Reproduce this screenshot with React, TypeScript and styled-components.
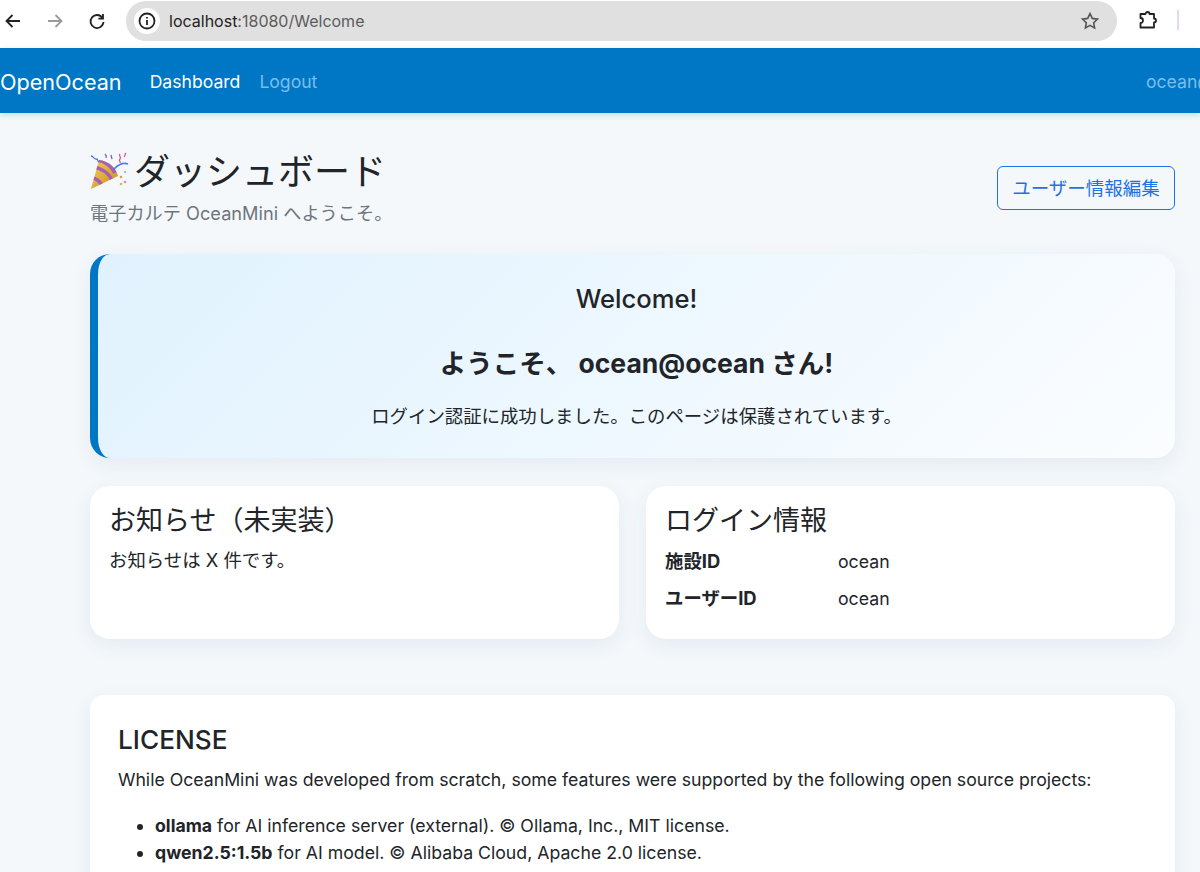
import styled, { createGlobalStyle } from "styled-components"

const SANS = `Inter, "Noto Sans CJK JP", sans-serif`

const GlobalStyle = createGlobalStyle`
  html, body {
    margin: 0;
    padding: 0;
    height: 872px;
    overflow: hidden;
    background: #f4f8fb;
    font-family: ${SANS};
    color: #212529;
  }
`

const Chrome = styled.div`
  height: 48px;
  background: #fff;
  display: flex;
  align-items: center;
  position: relative;
`

const NavIcon = styled.svg<{ $faded?: boolean }>`
  width: 20px;
  height: 20px;
  flex: none;
  fill: none;
  stroke: ${(p) => (p.$faded ? "#9a9a9a" : "#222")};
  stroke-width: 1.8;
`

const StarIcon = styled(NavIcon)`
  stroke: #555;
  stroke-width: 1.6;
`

const ChromeButtons = styled.div`
  display: flex;
  gap: 22px;
  padding: 0 19px 7px 3px;
`

const Omnibox = styled.div`
  width: 991px;
  height: 40px;
  margin-top: -7px;
  background: #e0e0e0;
  border-radius: 20px;
  display: flex;
  align-items: center;
  padding: 0 17px 0 8px;
  box-sizing: border-box;
  font-size: 16px;
  color: #5c5c5c;
`

const InfoBadge = styled.span`
  width: 26px;
  height: 26px;
  border-radius: 50%;
  background: #fff;
  display: flex;
  align-items: center;
  justify-content: center;
  margin-right: 9px;
`

const Host = styled.span`
  color: #222;
`

const Url = styled.span`
  flex: 1;
`

const ExtensionSlot = styled.div`
  margin: -8px 0 0 21px;
  display: flex;
  align-items: center;
  gap: 19px;
`

const Divider = styled.span`
  width: 2px;
  height: 20px;
  background: #e8d5f2;
`

const TopBar = styled.nav`
  height: 65px;
  box-sizing: border-box;
  padding-top: 2px;
  background: #0077c5;
  display: flex;
  align-items: center;
  position: relative;
  white-space: nowrap;
  box-shadow: 0 2px 6px rgba(0, 80, 140, 0.18);
`

const Brand = styled.span`
  font-size: 21.6px;
  color: #fff;
  margin-right: 28px;
`

const NavLink = styled.span<{ $dim?: boolean }>`
  font-size: 17.6px;
  color: ${(p) => (p.$dim ? "#7dbde9" : "#fff")};
  margin-right: 19px;
`

const NavUser = styled.span`
  position: absolute;
  left: 1146px;
  font-size: 17.6px;
  color: #7dbde9;
`

const Main = styled.main`
  padding: 37px 25px 0 90px;
`

const Header = styled.header`
  display: flex;
  justify-content: space-between;
  align-items: flex-start;
  height: 77px;
  margin-bottom: 27px;
`

const Title = styled.h1`
  margin: 0;
  font-size: 36px;
  font-weight: 400;
  line-height: 44px;
  display: flex;
  align-items: center;
`

const Confetti = styled.svg`
  width: 39px;
  height: 38px;
  margin: -3px 5px 0 0;
`

const Subtitle = styled.p`
  margin: 7px 0 0;
  font-size: 18.2px;
  line-height: 24px;
  color: #6c757d;
`

const EditButton = styled.button`
  width: 178px;
  height: 44px;
  background: transparent;
  border: 1px solid #1f72e4;
  border-radius: 6px;
  color: #1f72e4;
  font: 18.5px ${SANS};
  padding: 0 0 2px;
  margin-top: 16px;
`

const WelcomeCard = styled.section`
  height: 204px;
  box-sizing: border-box;
  border-left: 8px solid #0077c5;
  border-radius: 20px;
  background: linear-gradient(135deg, #e0f2fe 0%, #fbfdff 100%);
  box-shadow: 0 6px 20px rgba(40, 80, 120, 0.08);
  text-align: center;
  padding-top: 28px;
`

const WelcomeTitle = styled.h2`
  margin: 0;
  font-size: 25.6px;
  font-weight: 500;
  line-height: 34px;
`

const Greeting = styled.h2`
  margin: 29px 0 0;
  font-size: 26.5px;
  font-weight: 700;
  line-height: 36px;
`

const WelcomeText = styled.p`
  margin: 22px 0 0;
  font-size: 18.4px;
  line-height: 26px;
`

const InfoRow = styled.div`
  display: grid;
  grid-template-columns: 529px 529px;
  gap: 27px;
  margin-top: 28px;
`

const Card = styled.section`
  height: 153px;
  box-sizing: border-box;
  padding: 16px 19px;
  background: #fff;
  border-radius: 20px;
  box-shadow: 0 6px 20px rgba(40, 80, 120, 0.08);
`

const CardTitle = styled.h3`
  margin: 0 0 3px;
  font-size: 27px;
  font-weight: 400;
  line-height: 38px;
`

const CardText = styled.p`
  margin: 7px 0 0;
  font-size: 18.4px;
  line-height: 27px;
`

const InfoLine = styled.div`
  display: grid;
  grid-template-columns: 173px 1fr;
  font-size: 17.7px;
  line-height: 37px;
`

const InfoLabel = styled.span`
  font-size: 18.4px;
  font-weight: 700;
`

const LicenseCard = styled.section`
  margin-top: 56px;
  height: 300px;
  box-sizing: border-box;
  padding: 26px 28px;
  background: #fff;
  border-radius: 14px 14px 0 0;
  box-shadow: 0 6px 20px rgba(40, 80, 120, 0.08);
`

const LicenseTitle = styled.h2`
  margin: 0;
  font-size: 26.2px;
  font-weight: 500;
  line-height: 38px;
`

const LicenseText = styled.p`
  margin: 7px 0 0;
  font-size: 17.68px;
  line-height: 27px;
`

const LicenseList = styled.ul`
  margin: 19px 0 0;
  padding-left: 37px;
  font-size: 17.7px;
  line-height: 27px;
`

const Stage = styled.div`
  width: 1200px;
  height: 872px;
  overflow: hidden;
`

export default function App() {
  return (
    <Stage>
      <GlobalStyle />
      <Chrome>
        <ChromeButtons>
          <NavIcon viewBox="0 0 20 20"><path d="M17 10H4M9.500 4 3.500 10l6 6" /></NavIcon>
          <NavIcon $faded viewBox="0 0 20 20"><path d="M3 10h13M10.500 4l6 6-6 6" /></NavIcon>
          <NavIcon viewBox="0 0 20 20"><path d="M15.500 7A6.500 6.500 0 1 0 16.500 11M16 3v4.600h-4.600" /></NavIcon>
        </ChromeButtons>
        <Omnibox>
          <InfoBadge>
            <NavIcon viewBox="0 0 20 20">
              <circle cx="10" cy="10" r="7.500" />
              <path d="M10 9v5M10 6v1.600" />
            </NavIcon>
          </InfoBadge>
          <Url><Host>localhost</Host>:18080/Welcome</Url>
          <StarIcon viewBox="0 0 20 20">
            <path d="m10 2.600 2.300 4.800 5.200.7-3.800 3.600.9 5.200L10 14.400l-4.600 2.500.9-5.200-3.800-3.600 5.200-.7z" />
          </StarIcon>
        </Omnibox>
        <ExtensionSlot>
          <NavIcon viewBox="0 0 20 20">
            <path d="M2.500 4h5a2 2 0 0 1 4 0H16v4.500a2 2 0 0 1 0 4V17.500H2.500V13a2.500 2.500 0 0 0 0-5z" strokeLinejoin="round" />
          </NavIcon>
          <Divider />
        </ExtensionSlot>
      </Chrome>
      <TopBar>
        <Brand>OpenOcean</Brand>
        <NavLink>Dashboard</NavLink>
        <NavLink $dim>Logout</NavLink>
        <NavUser>ocean@ocean</NavUser>
      </TopBar>
      <Main>
        <Header>
          <div>
            <Title>
              <Confetti viewBox="0 0 39 38">
                <defs>
                  <linearGradient id="cone" x1="0" y1="0" x2="1" y2="1">
                    <stop offset="0" stopColor="#f6cf5a" />
                    <stop offset="1" stopColor="#c98a1e" />
                  </linearGradient>
                  <clipPath id="coneClip">
                    <path d="M1 37 9 8c9 1 17 7 19 16z" />
                  </clipPath>
                </defs>
                <path d="M1 37 9 8c9 1 17 7 19 16z" fill="url(#cone)" />
                <g clipPath="url(#coneClip)" fill="none" stroke="#a55fb5" strokeWidth="3.400">
                  <path d="M0 25c6 1 11 5 13 11" />
                  <path d="M3 15c9 1 17 7 19 14" />
                  <path d="M7 8c7 1 15 6 18 13" />
                </g>
                <path d="M24 17c5-5 9-7 14-5" fill="none" stroke="#4b82dc" strokeWidth="1.700" />
                <path d="M1 4c3 0 2 3 5 3s1 3 3 3" fill="none" stroke="#4b6fdc" strokeWidth="1.300" />
                <path d="M30 2c-2 2 2 3 0 5s1 2 0 4M36 1c-2 1 0 3-2 4" fill="none" stroke="#d2558f" strokeWidth="1.300" />
                <path d="M15 2c1 1 2 2 1 4M21 3l1 4" fill="none" stroke="#7a5fc0" strokeWidth="1.300" />
                <circle cx="31" cy="25" r="1.300" fill="#e39b3c" />
                <circle cx="35" cy="30" r="1.300" fill="#e78fa8" />
                <circle cx="31" cy="32" r="1.300" fill="#e9b43c" />
                <circle cx="35" cy="20" r="1" fill="#8f9fe0" />
              </Confetti>
              ダッシュボード
            </Title>
            <Subtitle>電子カルテ OceanMini へようこそ。</Subtitle>
          </div>
          <EditButton>ユーザー情報編集</EditButton>
        </Header>
        <WelcomeCard>
          <WelcomeTitle>Welcome!</WelcomeTitle>
          <Greeting>ようこそ、 ocean@ocean さん!</Greeting>
          <WelcomeText>ログイン認証に成功しました。このページは保護されています。</WelcomeText>
        </WelcomeCard>
        <InfoRow>
          <Card>
            <CardTitle>お知らせ（未実装）</CardTitle>
            <CardText>お知らせは X 件です。</CardText>
          </Card>
          <Card>
            <CardTitle>ログイン情報</CardTitle>
            <InfoLine><InfoLabel>施設ID</InfoLabel><span>ocean</span></InfoLine>
            <InfoLine><InfoLabel>ユーザーID</InfoLabel><span>ocean</span></InfoLine>
          </Card>
        </InfoRow>
        <LicenseCard>
          <LicenseTitle>LICENSE</LicenseTitle>
          <LicenseText>
            While OceanMini was developed from scratch, some features were supported by the following open source projects:
          </LicenseText>
          <LicenseList>
            <li><b>ollama</b> for AI inference server (external). © Ollama, Inc., MIT license.</li>
            <li><b>qwen2.5:1.5b</b> for AI model. © Alibaba Cloud, Apache 2.0 license.</li>
          </LicenseList>
        </LicenseCard>
      </Main>
    </Stage>
  )
}
